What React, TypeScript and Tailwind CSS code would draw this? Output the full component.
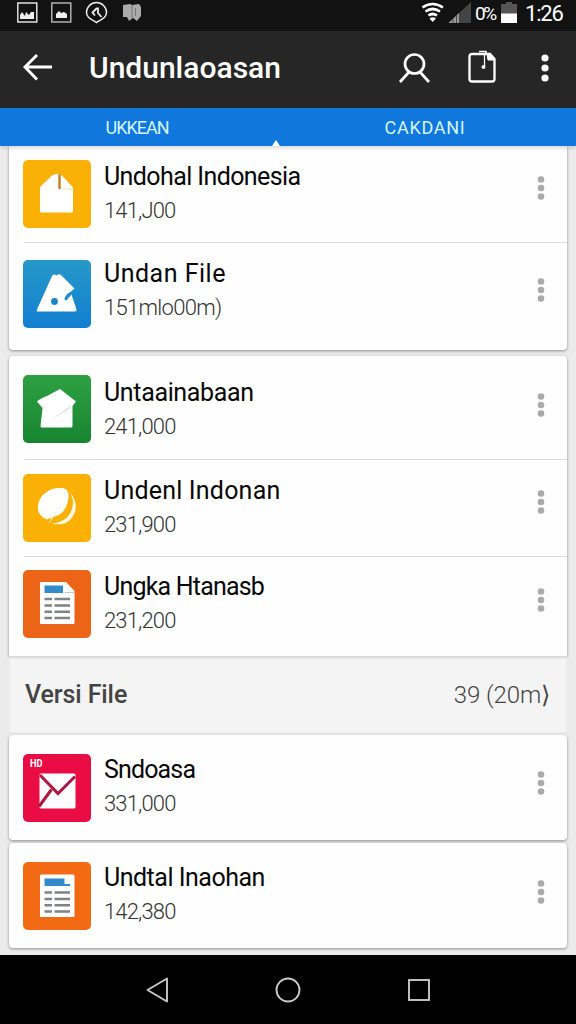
import type { ReactNode } from "react"

type Item = {
    title: string;
    size: string;
    icon: ReactNode;
    row: string;
    tile: string;
    text: string;
    dots: string;
    titleClass: string;
    sizeClass: string;
    line?: boolean;
}

function BagIcon() {
    return (
        <svg viewBox="0 0 68 68" className="w-full h-full">
            <path d="M17 27 L29 15.500 Q31 14 34 14 Q37 14 39 15.500 L50 27.500 V51 Q50 52.500 48.500 52.500 H18.500 Q17 52.500 17 51Z" fill="#fff" />
            <path d="M36.500 14.500V29" stroke="#b87f1c" strokeWidth="2.400" />
            <path d="M40 29H49.500" stroke="#fbdf9c" strokeWidth="1" />
        </svg>
    )
}

function ShapeIcon() {
    return (
        <svg viewBox="0 0 68 68" className="w-full h-full">
            <path d="M29 16 Q30 14 32 14.500 L33.500 15.500 L36 14 L38 15 L51.500 28.500 L48 31.500 Q42.500 34 41.500 39 Q43 42 45 38.500 L48.500 34.500 L53.500 49.500 Q54 51.500 52 51.500 H15 Q13 51.500 14 49.500Z" fill="#fff" />
            <circle cx="31.500" cy="41.500" r="3.400" fill="#1c84c9" />
        </svg>
    )
}

function HouseIcon() {
    return (
        <svg viewBox="0 0 68 68" className="w-full h-full">
            <path d="M37 14 L53 26.500 L49.500 31 V51 Q49.500 52.500 48 52.500 H19 Q17.500 52.500 17.500 51 L19.500 33 L14 26.500 Q16 24 24 21Z" fill="#fff" />
            <path d="M26 46 L49 30 L46 34Z" fill="#d8dde0" />
        </svg>
    )
}

function LeafIcon() {
    return (
        <svg viewBox="0 0 68 68" className="w-full h-full">
            <path d="M24 45.500 C17 43 14 37 15 31 C17 20 27 14 36 14 C43 14 46 16 45.500 23 C44.500 35 38 42 30.500 42.500 L25.500 50.500 L28.500 43.500Z" fill="#fff" />
            <path d="M47 18.500 C53 25 55 34 50 42 C46 49 39 52 29 49.500 C38 49 46 44 48.500 36 C51 29 50 24 47 18.500Z" fill="#fff8dc" />
        </svg>
    )
}

function DocIcon({ fold = true }: { fold?: boolean }) {
    return (
        <svg viewBox="0 0 68 68" className="w-full h-full">
            <path d={fold ? "M17 13 Q17 12 18 12 H43 L51.500 21 V53 Q51.500 54 50.500 54 H18 Q17 54 17 53Z" : "M17 14 Q17 12.500 18 12.500 H50 Q51.500 12.500 51.500 14 V54 Q51.500 55 50.500 55 H18 Q17 55 17 54Z"} fill="#fff" />
            <path d={fold ? "M21.500 15.500H40V23H21.500Z" : "M21.500 16.500H41.500V22H47V24H21.500Z"} fill="#328ccb" />
            {fold && <path d="M41.500 22.500H51" stroke="#c7c7c7" strokeWidth="1.200" />}
            <path d="M21.500 29H29M31.500 29H47M21.500 35.500H29M31.500 35.500H47M21.500 41.700H29M31.500 41.700H47M21.500 48H29M31.500 48H47" stroke="#7f8387" strokeWidth="2.600" transform={fold ? undefined : "translate(0 1.500)"} />
        </svg>
    )
}

function MailIcon() {
    return (
        <svg viewBox="0 0 68 68" className="w-full h-full">
            <path d="M18 19.500H51Q52.500 19.500 52.500 21V53Q52.500 54.500 51 54.500H18Q16.500 54.500 16.500 53V21Q16.500 19.500 18 19.500Z" fill="#fff" />
            <path d="M17 21 L35 39.500 L52 22.500" fill="none" stroke="#ad1740" strokeWidth="3" />
            <path d="M28.500 35.500 L16 52.500" stroke="#ad1740" strokeWidth="3" />
            <text x="7" y="13" textLength="12.500" lengthAdjust="spacingAndGlyphs" fontSize="10" fontWeight="700" fontFamily="Roboto" fill="#fff">HD</text>
        </svg>
    )
}

const topItems: Item[] = [
    { title: "Undohal Indonesia", size: "141,J00", icon: <BagIcon />, row: "h-[97px] pt-[14px]", tile: "bg-[#fbb005]", text: "mt-0", dots: "mt-[16px]", titleClass: "tracking-[-0.6px]", sizeClass: "tracking-[-0.85px]", line: true },
    { title: "Undan File", size: "151mlo00m)", icon: <ShapeIcon />, row: "h-[107px] pt-[17px]", tile: "bg-linear-to-b from-[#2699c9] to-[#127fd0]", text: "-mt-[3px]", dots: "mt-[18px]", titleClass: "tracking-[0.5px]", sizeClass: "tracking-[-0.7px]" },
]

const middleItems: Item[] = [
    { title: "Untaainabaan", size: "241,000", icon: <HouseIcon />, row: "h-[104px] pt-[19px]", tile: "bg-linear-to-b from-[#2ea043] to-[#178530]", text: "mt-[1px]", dots: "mt-[18px]", titleClass: "tracking-[-0.35px]", sizeClass: "tracking-[-0.85px]", line: true },
    { title: "Undenl Indonan", size: "231,900", icon: <LeafIcon />, row: "h-[97px] pt-[14px]", tile: "bg-[#fbb005]", text: "mt-0", dots: "mt-[16px]", titleClass: "tracking-[0.2px]", sizeClass: "tracking-[-0.85px]", line: true },
    { title: "Ungka Htanasb", size: "231,200", icon: <DocIcon />, row: "h-[99px] pt-[13px]", tile: "bg-[#ec6516]", text: "mt-0", dots: "mt-[18px]", titleClass: "tracking-[-0.8px]", sizeClass: "tracking-[-0.85px]" },
]

const mailItems: Item[] = [
    { title: "Sndoasa", size: "331,000", icon: <MailIcon />, row: "h-[105px] pt-[19px]", tile: "bg-[#e90c45]", text: "-mt-[1px]", dots: "mt-[17px]", titleClass: "tracking-[-0.85px]", sizeClass: "tracking-[-0.85px]" },
]

const lastItems: Item[] = [
    { title: "Undtal Inaohan", size: "142,380", icon: <DocIcon fold={false} />, row: "h-[105px] pt-[19px]", tile: "bg-[#f26a13]", text: "-mt-[1px]", dots: "mt-[18px]", titleClass: "tracking-[-0.5px]", sizeClass: "tracking-[-0.85px]" },
]

function Row({ item }: { item: Item }) {
    return (
        <div className={`relative flex items-start pl-[14px] pr-[21px] ${item.row}`}>
            <div className={`w-[68px] h-[68px] shrink-0 rounded-[5px] overflow-hidden ${item.tile}`}>
                {item.icon}
            </div>
            <div className={`ml-[13px] flex-1 whitespace-nowrap ${item.text}`}>
                <div className={`h-[34px] leading-[34px] text-[25px] text-[#080808] ${item.titleClass}`}>{item.title}</div>
                <div className={`mt-[1px] h-8 leading-8 text-[22px] font-light text-[#333] ${item.sizeClass}`}>{item.size}</div>
            </div>
            <svg viewBox="0 0 10 24" className={`w-[10px] h-6 ${item.dots}`} fill="#aaa">
                <circle cx="5" cy="3.500" r="3.300" />
                <circle cx="5" cy="12" r="3.300" />
                <circle cx="5" cy="20.500" r="3.300" />
            </svg>
            {item.line && <div className="absolute bottom-0 left-[15px] right-0 h-px bg-[#dcdcdc]" />}
        </div>
    )
}

function Card({ items, className }: { items: Item[]; className: string }) {
    return (
        <div className={`bg-[#fefefe] shadow-[0_1px_3px_rgba(0,0,0,0.4)] ${className}`}>
            {items.map((item) => <Row key={item.title} item={item} />)}
        </div>
    )
}

function StatusBar() {
    return (
        <div className="flex h-[31px] items-start bg-[#121212] pl-[17px] pr-[11px] text-white">
            <svg viewBox="0 0 128 28" className="w-32 h-7" fill="none">
                <rect x=".8" y="3" width="19" height="19" stroke="#eee" strokeWidth="1.400" />
                <path d="M3 19V15L5 12L8 16L9 12L12 15L14 12L17 12V19Z" fill="#eee" />
                <rect x="34.800" y="3" width="19" height="19" stroke="#bbb" strokeWidth="1.400" />
                <path d="M39 18V14L42 11L44 13L47 12L50 14V18Z" fill="#eee" />
                <path d="M79.500 2.500C85 2.500 89.500 7 89.500 12.500C89.500 17 86 18.500 79.500 22.500C73 18.500 69.500 17 69.500 12.500C69.500 7 74 2.500 79.500 2.500Z" stroke="#eee" strokeWidth="1.500" />
                <path d="M80 8L75.500 12.500L78 15.500M81 7.500V13L84.500 17" stroke="#eee" strokeWidth="1.800" />
                <path d="M106 5L113 4L115 5L122 4L124 7V16L120 21L116 18L112 21L110 17L106 17Z" fill="#aaa" />
                <path d="M115 5V18M118.500 8V16" stroke="#777" strokeWidth="1" />
            </svg>
            <svg viewBox="0 0 50 28" className="ml-auto w-[50px] h-7">
                <path d="M1.500 7.500Q11.500 .5 22 7.500M4.500 11.500Q11.500 6.500 19 11.500M7.500 15.500Q11.500 12.500 16 15.500" stroke="#fff" strokeWidth="2.700" fill="none" />
                <path d="M11.700 22L8.500 18.500Q11.700 16 15 18.500Z" fill="#fff" />
                <path d="M27.500 23L50 2V23Z" fill="#444" />
                <path d="M27.500 23L38 13V23Z" fill="#999" />
                <path d="M32 18V23M35.500 15V23" stroke="#333" strokeWidth=".8" />
            </svg>
            <span className="ml-[4px] w-[22px] text-[19px] leading-7 tracking-[-2.500px]">0%</span>
            <svg viewBox="0 0 16 28" className="ml-[4px] w-4 h-7">
                <path d="M5 2H11V4H16V14H0V4H5Z" fill="#555" />
                <path d="M0 13.500H16V23H0Z" fill="#fff" />
            </svg>
            <span className="ml-[8px] w-[40px] text-[22px] leading-7 tracking-[-1.200px]">1:26</span>
        </div>
    )
}

function AppBar() {
    return (
        <div className="flex h-[77px] items-center bg-[#262626] pl-[23px] pr-[27px] text-white">
            <svg viewBox="0 0 30 30" className="w-[30px] h-[30px] -mt-[5px]" fill="none" stroke="#fff" strokeWidth="2.900">
                <path d="M29 15H2M14 3L2 15L14 27.500" />
            </svg>
            <h1 className="ml-[36px] -mt-[3px] text-[30px] font-medium leading-9 whitespace-nowrap">Undunlaoasan</h1>
            <svg viewBox="0 0 32 32" className="ml-auto w-8 h-8 -mt-[4px]" fill="none" stroke="#fff" strokeWidth="2.700">
                <circle cx="15.500" cy="12" r="9.500" />
                <path d="M10 20L1 30M21 20L30 30" />
            </svg>
            <svg viewBox="0 0 30 34" className="ml-[36px] w-[30px] h-[34px] -mt-[5px]" fill="none" stroke="#fff" strokeWidth="2.300">
                <path d="M20 4H5Q2.500 4 2.500 6.500V29Q2.500 31.500 5 31.500H25Q27.500 31.500 27.500 29V9L23 4H19" />
                <path d="M12 1.500H19V4" strokeWidth="1.500" />
                <path d="M20 4H23L27.500 9V10H21Z" fill="#fff" strokeWidth="1" />
                <path d="M17.500 3V16" strokeWidth="1.200" />
                <circle cx="16.500" cy="17" r="1.500" fill="#fff" strokeWidth="1" />
            </svg>
            <svg viewBox="0 0 8 30" className="ml-[44px] w-2 h-[30px] -mt-[3px]" fill="#fff">
                <circle cx="4" cy="5" r="3.600" />
                <circle cx="4" cy="15" r="3.600" />
                <circle cx="4" cy="25" r="3.600" />
            </svg>
        </div>
    )
}

export default function App() {
    return (
        <div className="flex h-[1024px] w-[576px] flex-col overflow-hidden bg-[#ebebec] font-[Roboto,sans-serif]">
            <StatusBar />
            <AppBar />
            <div className="relative z-10 grid h-[38px] grid-cols-[274px_302px] bg-[#1078dc] text-center text-[18px] leading-[39px] text-[#d5f5fd] shadow-[0_2px_4px_rgba(0,0,0,0.15)]">
                <span className="tracking-[-1px]">UKKEAN</span>
                <span className="tracking-[0.7px]">CAKDANI</span>
                <svg viewBox="0 0 8 6" className="absolute bottom-0 left-[272px] w-2 h-1.5">
                    <path d="M4 0L8 6H0Z" fill="#fff" />
                </svg>
            </div>

            <div className="flex h-[809px] flex-col px-[9px]">
                <Card items={topItems} className="rounded-b-[4px]" />
                <Card items={middleItems} className="mt-[6px] rounded-t-[4px]" />
                <div className="flex h-[76px] items-center justify-between bg-[#f4f4f4] pl-4 pr-[17px] pt-[2px] text-[#444] shadow-[inset_0_2px_2px_rgba(0,0,0,0.12)]">
                    <span className="text-[25px] font-medium tracking-[-0.1px]">Versi File</span>
                    <span className="text-[24px] font-light tracking-[-0.1px]">39 (20m⟩</span>
                </div>
                <Card items={mailItems} className="mt-[3px] rounded-[4px]" />
                <Card items={lastItems} className="mt-[3px] rounded-[4px]" />
            </div>

            <div className="flex h-[69px] items-center justify-center bg-black">
                <svg viewBox="0 0 284 28" className="w-[284px] h-7" fill="none" stroke="#c8c8c8" strokeWidth="1.900">
                    <path d="M1.500 14L21 2.500V25.500Z" strokeLinejoin="round" />
                    <circle cx="142" cy="14" r="11.500" />
                    <rect x="263" y="4" width="20" height="20" />
                </svg>
            </div>
        </div>
    )
}
